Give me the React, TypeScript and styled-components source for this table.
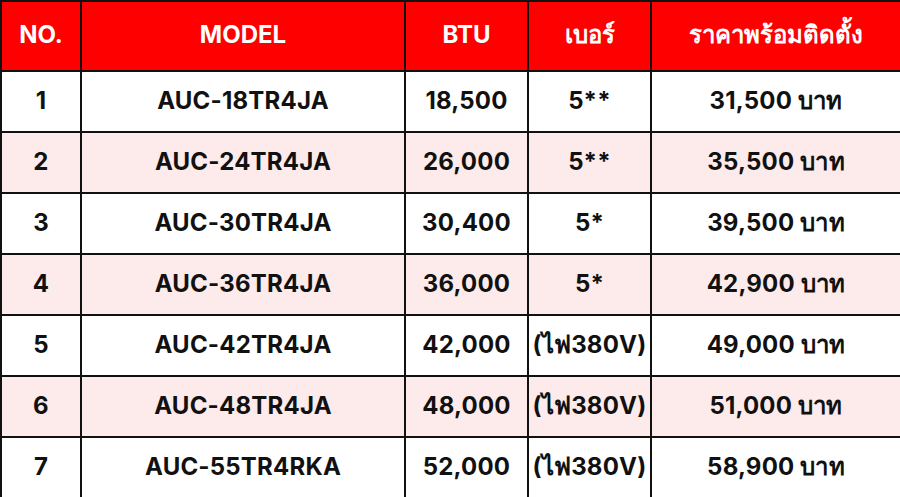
import React from 'react'
import styled, { createGlobalStyle } from 'styled-components'

const GlobalStyle = createGlobalStyle`
  html, body {
    margin: 0;
    padding: 0;
    background: #ffffff;
  }
  body {
    font-family: 'Inter', 'Noto Sans', 'DejaVu Sans', sans-serif;
  }
`

const Table = styled.table`
  width: 900px;
  height: 497px;
  border-collapse: collapse;
  table-layout: fixed;
`

const HeadCell = styled.th<{ $w: number }>`
  width: ${(p) => p.$w}px;
  height: 64px;
  background: #fe0000;
  color: #ffffff;
  font-size: 24px;
  font-weight: 700;
  text-align: center;
  border: 2px solid #111111;
  padding: 0 0 4px;
`

const Row = styled.tr<{ $alt: boolean }>`
  background: ${(p) => (p.$alt ? '#fdeaea' : '#ffffff')};
`

const Cell = styled.td`
  height: 56px;
  color: #111111;
  font-size: 24px;
  font-weight: 700;
  letter-spacing: 0.2px;
  text-align: center;
  border: 2px solid #111111;
  padding: 0 0 3px;
  white-space: nowrap;
`

const columns = [
  { label: 'NO.', w: 78 },
  { label: 'MODEL', w: 322 },
  { label: 'BTU', w: 121 },
  { label: 'เบอร์', w: 121 },
  { label: 'ราคาพร้อมติดตั้ง', w: 248 },
]

const rows = [
  ['1', 'AUC-18TR4JA', '18,500', '5**', '31,500 บาท'],
  ['2', 'AUC-24TR4JA', '26,000', '5**', '35,500 บาท'],
  ['3', 'AUC-30TR4JA', '30,400', '5*', '39,500 บาท'],
  ['4', 'AUC-36TR4JA', '36,000', '5*', '42,900 บาท'],
  ['5', 'AUC-42TR4JA', '42,000', '(ไฟ380V)', '49,000 บาท'],
  ['6', 'AUC-48TR4JA', '48,000', '(ไฟ380V)', '51,000 บาท'],
  ['7', 'AUC-55TR4RKA', '52,000', '(ไฟ380V)', '58,900 บาท'],
]

const App: React.FC = () => {
  return (
    <>
      <GlobalStyle />
      <Table>
        <thead>
          <tr>
            {columns.map((col) => (
              <HeadCell key={col.label} $w={col.w}>
                {col.label}
              </HeadCell>
            ))}
          </tr>
        </thead>
        <tbody>
          {rows.map((row, index) => (
            <Row key={index} $alt={index % 2 === 1}>
              {row.map((value, i) => (
                <Cell key={i}>{value}</Cell>
              ))}
            </Row>
          ))}
        </tbody>
      </Table>
    </>
  )
}

export default App
